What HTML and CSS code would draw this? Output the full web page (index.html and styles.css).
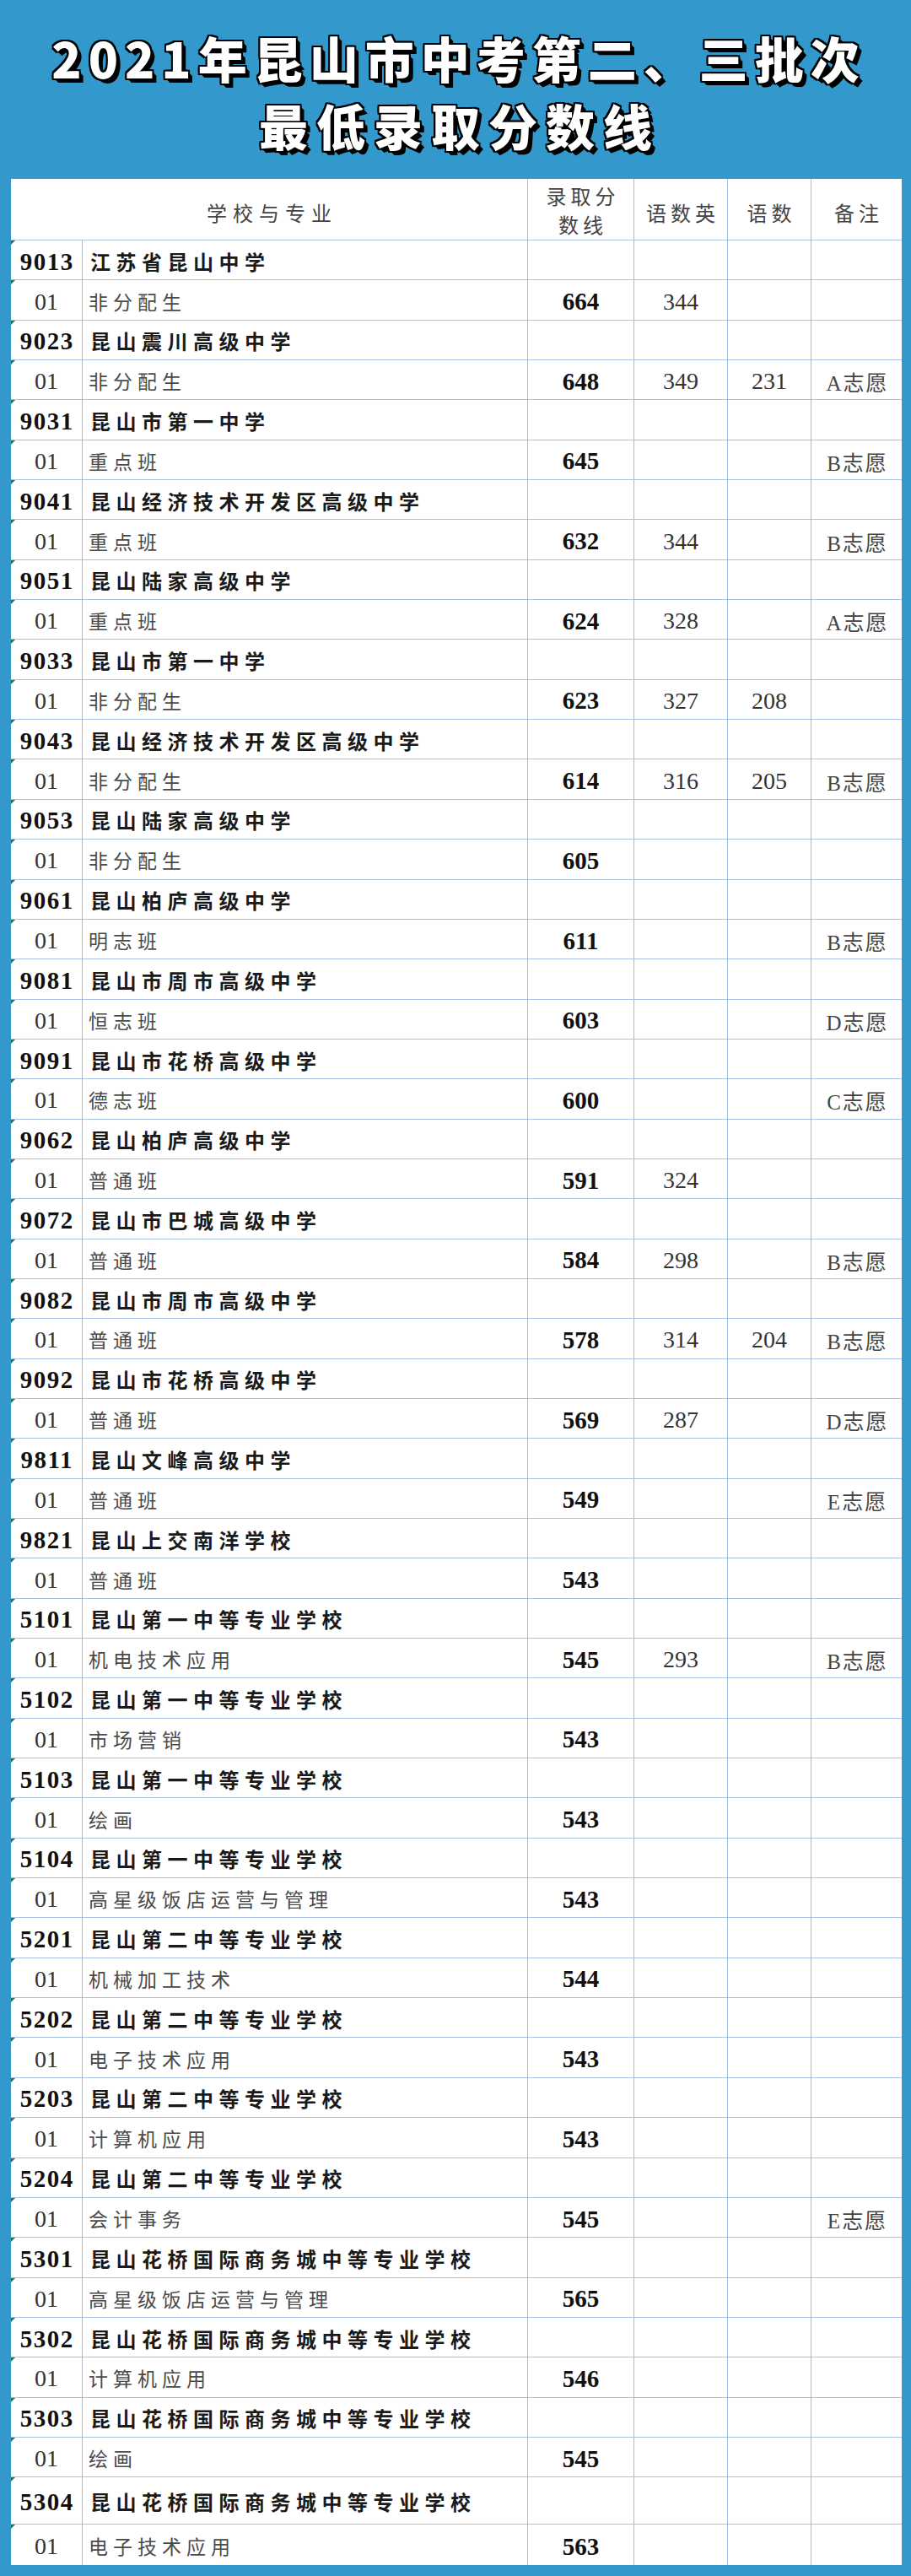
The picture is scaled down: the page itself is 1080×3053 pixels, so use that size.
FILE: index.html
```html
<!DOCTYPE html>
<html lang="zh-CN">
<head>
<meta charset="utf-8">
<title>2021年昆山市中考第二、三批次最低录取分数线</title>
<link rel="stylesheet" href="styles.css">
</head>
<body>
<div class="page">
  <header class="title">
    <div class="title-line">2021年昆山市中考第二、三批次</div>
    <div class="title-line">最低录取分数线</div>
  </header>
  <div class="table">
    <div class="row head">
      <div class="c h span2">学校与专业</div>
      <div class="c h two">录取分<br>数线</div>
      <div class="c h">语数英</div>
      <div class="c h">语数</div>
      <div class="c h">备注</div>
    </div>

    <div class="row"><div class="c code">9013</div><div class="c sname">江苏省昆山中学</div><div class="c"></div><div class="c"></div><div class="c"></div><div class="c"></div></div>
    <div class="row"><div class="c code sub">01</div><div class="c pname">非分配生</div><div class="c score">664</div><div class="c num">344</div><div class="c num"></div><div class="c note"></div></div>

    <div class="row"><div class="c code">9023</div><div class="c sname">昆山震川高级中学</div><div class="c"></div><div class="c"></div><div class="c"></div><div class="c"></div></div>
    <div class="row"><div class="c code sub">01</div><div class="c pname">非分配生</div><div class="c score">648</div><div class="c num">349</div><div class="c num">231</div><div class="c note">A志愿</div></div>

    <div class="row"><div class="c code">9031</div><div class="c sname">昆山市第一中学</div><div class="c"></div><div class="c"></div><div class="c"></div><div class="c"></div></div>
    <div class="row"><div class="c code sub">01</div><div class="c pname">重点班</div><div class="c score">645</div><div class="c num"></div><div class="c num"></div><div class="c note">B志愿</div></div>

    <div class="row"><div class="c code">9041</div><div class="c sname">昆山经济技术开发区高级中学</div><div class="c"></div><div class="c"></div><div class="c"></div><div class="c"></div></div>
    <div class="row"><div class="c code sub">01</div><div class="c pname">重点班</div><div class="c score">632</div><div class="c num">344</div><div class="c num"></div><div class="c note">B志愿</div></div>

    <div class="row"><div class="c code">9051</div><div class="c sname">昆山陆家高级中学</div><div class="c"></div><div class="c"></div><div class="c"></div><div class="c"></div></div>
    <div class="row"><div class="c code sub">01</div><div class="c pname">重点班</div><div class="c score">624</div><div class="c num">328</div><div class="c num"></div><div class="c note">A志愿</div></div>

    <div class="row"><div class="c code">9033</div><div class="c sname">昆山市第一中学</div><div class="c"></div><div class="c"></div><div class="c"></div><div class="c"></div></div>
    <div class="row"><div class="c code sub">01</div><div class="c pname">非分配生</div><div class="c score">623</div><div class="c num">327</div><div class="c num">208</div><div class="c note"></div></div>

    <div class="row"><div class="c code">9043</div><div class="c sname">昆山经济技术开发区高级中学</div><div class="c"></div><div class="c"></div><div class="c"></div><div class="c"></div></div>
    <div class="row"><div class="c code sub">01</div><div class="c pname">非分配生</div><div class="c score">614</div><div class="c num">316</div><div class="c num">205</div><div class="c note">B志愿</div></div>

    <div class="row"><div class="c code">9053</div><div class="c sname">昆山陆家高级中学</div><div class="c"></div><div class="c"></div><div class="c"></div><div class="c"></div></div>
    <div class="row"><div class="c code sub">01</div><div class="c pname">非分配生</div><div class="c score">605</div><div class="c num"></div><div class="c num"></div><div class="c note"></div></div>

    <div class="row"><div class="c code">9061</div><div class="c sname">昆山柏庐高级中学</div><div class="c"></div><div class="c"></div><div class="c"></div><div class="c"></div></div>
    <div class="row"><div class="c code sub">01</div><div class="c pname">明志班</div><div class="c score">611</div><div class="c num"></div><div class="c num"></div><div class="c note">B志愿</div></div>

    <div class="row"><div class="c code">9081</div><div class="c sname">昆山市周市高级中学</div><div class="c"></div><div class="c"></div><div class="c"></div><div class="c"></div></div>
    <div class="row"><div class="c code sub">01</div><div class="c pname">恒志班</div><div class="c score">603</div><div class="c num"></div><div class="c num"></div><div class="c note">D志愿</div></div>

    <div class="row"><div class="c code">9091</div><div class="c sname">昆山市花桥高级中学</div><div class="c"></div><div class="c"></div><div class="c"></div><div class="c"></div></div>
    <div class="row"><div class="c code sub">01</div><div class="c pname">德志班</div><div class="c score">600</div><div class="c num"></div><div class="c num"></div><div class="c note">C志愿</div></div>

    <div class="row"><div class="c code">9062</div><div class="c sname">昆山柏庐高级中学</div><div class="c"></div><div class="c"></div><div class="c"></div><div class="c"></div></div>
    <div class="row"><div class="c code sub">01</div><div class="c pname">普通班</div><div class="c score">591</div><div class="c num">324</div><div class="c num"></div><div class="c note"></div></div>

    <div class="row"><div class="c code">9072</div><div class="c sname">昆山市巴城高级中学</div><div class="c"></div><div class="c"></div><div class="c"></div><div class="c"></div></div>
    <div class="row"><div class="c code sub">01</div><div class="c pname">普通班</div><div class="c score">584</div><div class="c num">298</div><div class="c num"></div><div class="c note">B志愿</div></div>

    <div class="row"><div class="c code">9082</div><div class="c sname">昆山市周市高级中学</div><div class="c"></div><div class="c"></div><div class="c"></div><div class="c"></div></div>
    <div class="row"><div class="c code sub">01</div><div class="c pname">普通班</div><div class="c score">578</div><div class="c num">314</div><div class="c num">204</div><div class="c note">B志愿</div></div>

    <div class="row"><div class="c code">9092</div><div class="c sname">昆山市花桥高级中学</div><div class="c"></div><div class="c"></div><div class="c"></div><div class="c"></div></div>
    <div class="row"><div class="c code sub">01</div><div class="c pname">普通班</div><div class="c score">569</div><div class="c num">287</div><div class="c num"></div><div class="c note">D志愿</div></div>

    <div class="row"><div class="c code">9811</div><div class="c sname">昆山文峰高级中学</div><div class="c"></div><div class="c"></div><div class="c"></div><div class="c"></div></div>
    <div class="row"><div class="c code sub">01</div><div class="c pname">普通班</div><div class="c score">549</div><div class="c num"></div><div class="c num"></div><div class="c note">E志愿</div></div>

    <div class="row"><div class="c code">9821</div><div class="c sname">昆山上交南洋学校</div><div class="c"></div><div class="c"></div><div class="c"></div><div class="c"></div></div>
    <div class="row"><div class="c code sub">01</div><div class="c pname">普通班</div><div class="c score">543</div><div class="c num"></div><div class="c num"></div><div class="c note"></div></div>

    <div class="row"><div class="c code">5101</div><div class="c sname">昆山第一中等专业学校</div><div class="c"></div><div class="c"></div><div class="c"></div><div class="c"></div></div>
    <div class="row"><div class="c code sub">01</div><div class="c pname">机电技术应用</div><div class="c score">545</div><div class="c num">293</div><div class="c num"></div><div class="c note">B志愿</div></div>

    <div class="row"><div class="c code">5102</div><div class="c sname">昆山第一中等专业学校</div><div class="c"></div><div class="c"></div><div class="c"></div><div class="c"></div></div>
    <div class="row"><div class="c code sub">01</div><div class="c pname">市场营销</div><div class="c score">543</div><div class="c num"></div><div class="c num"></div><div class="c note"></div></div>

    <div class="row"><div class="c code">5103</div><div class="c sname">昆山第一中等专业学校</div><div class="c"></div><div class="c"></div><div class="c"></div><div class="c"></div></div>
    <div class="row"><div class="c code sub">01</div><div class="c pname">绘画</div><div class="c score">543</div><div class="c num"></div><div class="c num"></div><div class="c note"></div></div>

    <div class="row"><div class="c code">5104</div><div class="c sname">昆山第一中等专业学校</div><div class="c"></div><div class="c"></div><div class="c"></div><div class="c"></div></div>
    <div class="row"><div class="c code sub">01</div><div class="c pname">高星级饭店运营与管理</div><div class="c score">543</div><div class="c num"></div><div class="c num"></div><div class="c note"></div></div>

    <div class="row"><div class="c code">5201</div><div class="c sname">昆山第二中等专业学校</div><div class="c"></div><div class="c"></div><div class="c"></div><div class="c"></div></div>
    <div class="row"><div class="c code sub">01</div><div class="c pname">机械加工技术</div><div class="c score">544</div><div class="c num"></div><div class="c num"></div><div class="c note"></div></div>

    <div class="row"><div class="c code">5202</div><div class="c sname">昆山第二中等专业学校</div><div class="c"></div><div class="c"></div><div class="c"></div><div class="c"></div></div>
    <div class="row"><div class="c code sub">01</div><div class="c pname">电子技术应用</div><div class="c score">543</div><div class="c num"></div><div class="c num"></div><div class="c note"></div></div>

    <div class="row"><div class="c code">5203</div><div class="c sname">昆山第二中等专业学校</div><div class="c"></div><div class="c"></div><div class="c"></div><div class="c"></div></div>
    <div class="row"><div class="c code sub">01</div><div class="c pname">计算机应用</div><div class="c score">543</div><div class="c num"></div><div class="c num"></div><div class="c note"></div></div>

    <div class="row"><div class="c code">5204</div><div class="c sname">昆山第二中等专业学校</div><div class="c"></div><div class="c"></div><div class="c"></div><div class="c"></div></div>
    <div class="row"><div class="c code sub">01</div><div class="c pname">会计事务</div><div class="c score">545</div><div class="c num"></div><div class="c num"></div><div class="c note">E志愿</div></div>

    <div class="row"><div class="c code">5301</div><div class="c sname">昆山花桥国际商务城中等专业学校</div><div class="c"></div><div class="c"></div><div class="c"></div><div class="c"></div></div>
    <div class="row"><div class="c code sub">01</div><div class="c pname">高星级饭店运营与管理</div><div class="c score">565</div><div class="c num"></div><div class="c num"></div><div class="c note"></div></div>

    <div class="row"><div class="c code">5302</div><div class="c sname">昆山花桥国际商务城中等专业学校</div><div class="c"></div><div class="c"></div><div class="c"></div><div class="c"></div></div>
    <div class="row"><div class="c code sub">01</div><div class="c pname">计算机应用</div><div class="c score">546</div><div class="c num"></div><div class="c num"></div><div class="c note"></div></div>

    <div class="row"><div class="c code">5303</div><div class="c sname">昆山花桥国际商务城中等专业学校</div><div class="c"></div><div class="c"></div><div class="c"></div><div class="c"></div></div>
    <div class="row"><div class="c code sub">01</div><div class="c pname">绘画</div><div class="c score">545</div><div class="c num"></div><div class="c num"></div><div class="c note"></div></div>

    <div class="row tall"><div class="c code">5304</div><div class="c sname">昆山花桥国际商务城中等专业学校</div><div class="c"></div><div class="c"></div><div class="c"></div><div class="c"></div></div>
    <div class="row last"><div class="c code sub">01</div><div class="c pname">电子技术应用</div><div class="c score">563</div><div class="c num"></div><div class="c num"></div><div class="c note"></div></div>
  </div>
</div>
</body>
</html>
```

FILE: styles.css
```css
html, body {
  margin: 0;
  padding: 0;
}

body {
  background: #3399cc;
  width: 1080px;
  height: 3053px;
  overflow: hidden;
}

.page {
  display: flex;
  flex-direction: column;
}

.title {
  padding: 28px 0 24px;
  display: flex;
  flex-direction: column;
  align-items: center;
  font-family: "Noto Sans CJK SC", "Noto Sans", sans-serif;
  font-weight: 900;
  font-size: 58px;
  line-height: 80px;
  letter-spacing: 8px;
  color: #ffffff;
  text-shadow:
    -2px -2px 0 #000, 0 -2px 0 #000, 2px -2px 0 #000,
    -2px 0 0 #000, 2px 0 0 #000,
    -2px 2px 0 #000, 0 2px 0 #000, 2px 2px 0 #000,
    3px 3px 0 #000, 4px 4px 0 #000, 5px 5px 0 #000;
}

.title-line {
  padding-left: 8px;
  white-space: nowrap;
}

.title-line + .title-line {
  letter-spacing: 10px;
  padding-left: 10px;
}

.table {
  margin: 0 11px 0 13px;
  width: 1056px;
  background: #ffffff;
  font-family: "Liberation Serif", "Noto Sans CJK SC", serif;
  color: #222;
}

.row {
  display: grid;
  grid-template-columns: 84px 528px 126px 111px 99px 108px;
  height: 47.35px;
  box-sizing: border-box;
  border-top: 1px solid #a9c1e2;
}

.row.head {
  height: 72px;
  border-top: none;
}

.row.tall {
  height: 56px;
}

.row.last {
  height: 48.6px;
}

.c {
  box-sizing: border-box;
  border-left: 1px solid #a3bde0;
  display: flex;
  align-items: center;
  justify-content: center;
  white-space: nowrap;
  position: relative;
}

.c:first-child {
  border-left: none;
}

.h {
  font-family: "Noto Sans CJK SC", sans-serif;
  font-weight: 400;
  font-size: 24px;
  color: #444;
  letter-spacing: 5px;
  padding-left: 5px;
  padding-top: 6px;
}

.span2 {
  grid-column: span 2;
  letter-spacing: 7px;
  padding-left: 7px;
}

.two {
  line-height: 34px;
  text-align: center;
  padding-top: 2px;
}

.code {
  font-weight: 700;
  font-size: 29px;
  letter-spacing: 1.5px;
  padding-left: 1.5px;
  padding-top: 4px;
  color: #111;
}

.code::before {
  content: "";
  position: absolute;
  left: 0;
  top: 0;
  border-style: solid;
  border-width: 5px 5px 0 0;
  border-color: #1d7d3c transparent transparent transparent;
}

.code.sub {
  font-weight: 400;
  font-size: 28px;
  color: #333;
  letter-spacing: 0;
  padding-left: 0;
}

.sname {
  justify-content: flex-start;
  padding-left: 9px;
  font-family: "Noto Sans CJK SC", sans-serif;
  font-weight: 700;
  font-size: 24px;
  letter-spacing: 6.5px;
  color: #1a1a1a;
  padding-top: 2px;
}

.pname {
  justify-content: flex-start;
  padding-left: 7px;
  font-family: "Noto Sans CJK SC", sans-serif;
  font-weight: 400;
  font-size: 23px;
  letter-spacing: 6px;
  color: #4a4a4a;
  padding-top: 2px;
}

.score {
  font-weight: 700;
  font-size: 29px;
  color: #111;
  padding-top: 4px;
}

.num {
  font-weight: 400;
  font-size: 28px;
  color: #333;
  padding-top: 4px;
}

.note {
  font-size: 25px;
  color: #444;
  letter-spacing: 2px;
  padding-left: 2px;
  padding-top: 4px;
}
```
